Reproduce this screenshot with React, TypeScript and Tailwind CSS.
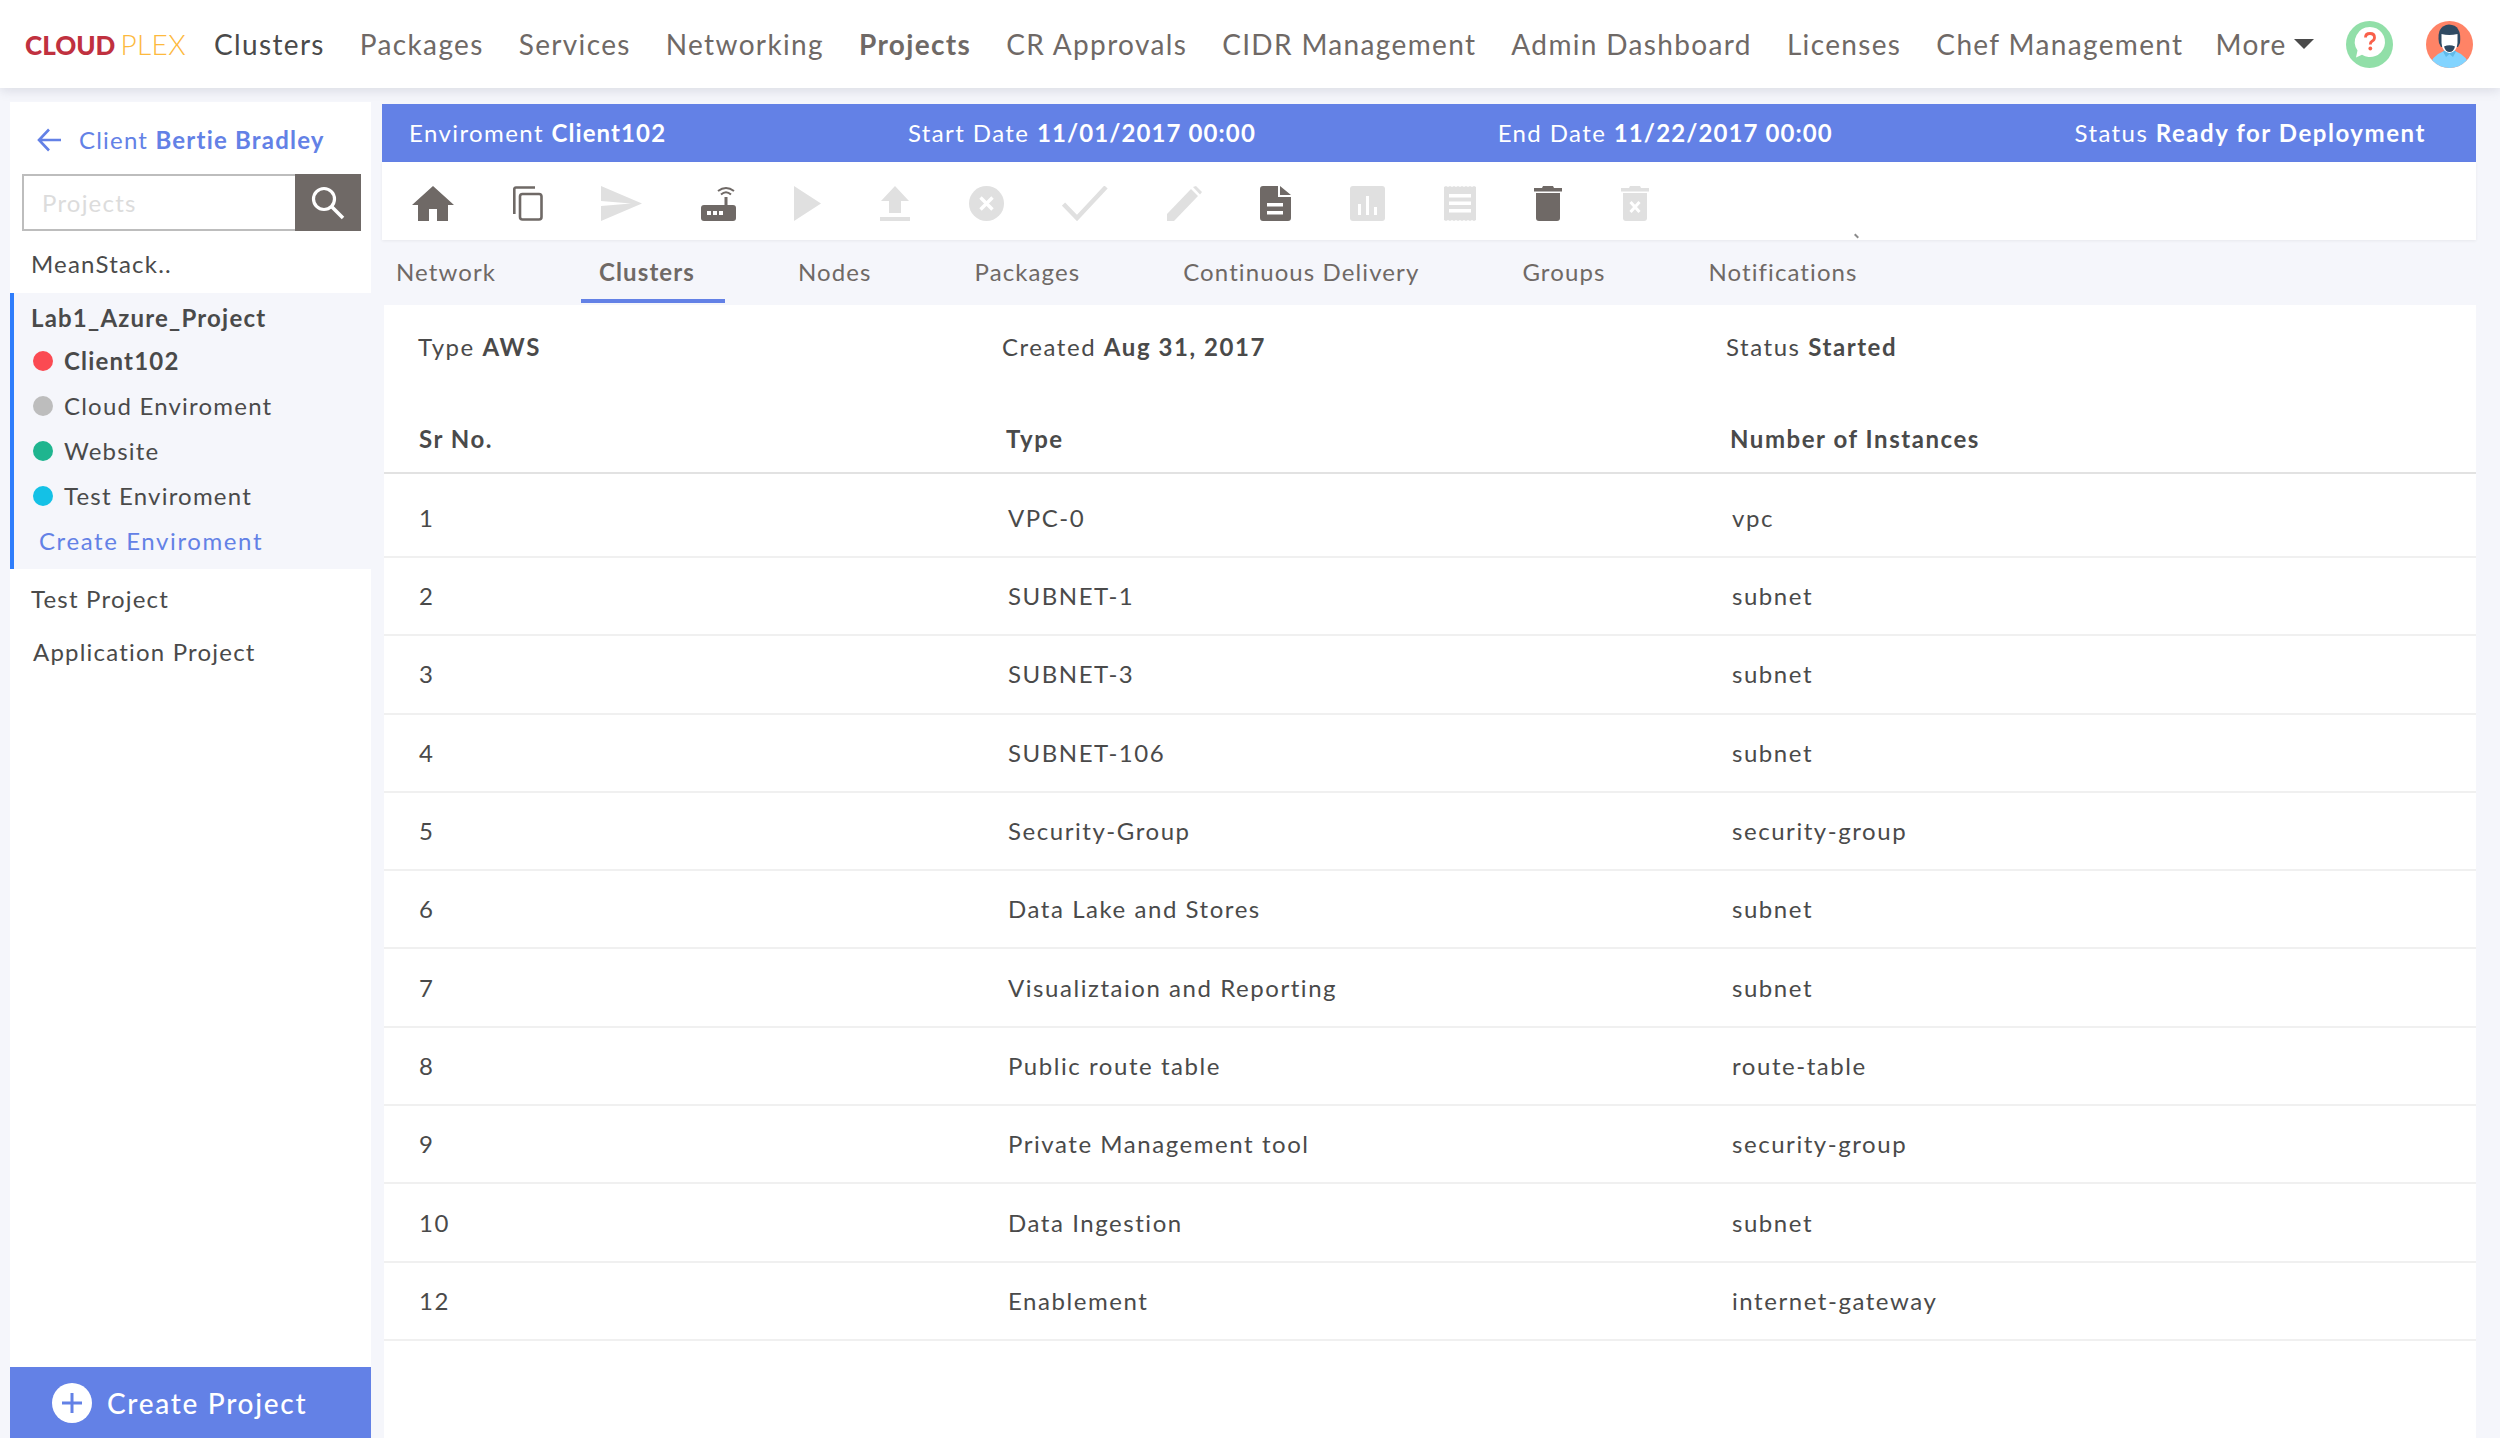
const navItems = [
  { label: "Clusters", cls: "text-[#4a4a4a]" },
  { label: "Packages", cls: "text-[#6f6966]" },
  { label: "Services", cls: "text-[#6f6966]" },
  { label: "Networking", cls: "text-[#6f6966]" },
  { label: "Projects", cls: "text-[#6f6966] font-bold" },
  { label: "CR Approvals", cls: "text-[#6f6966]" },
  { label: "CIDR Management", cls: "text-[#6f6966]" },
  { label: "Admin Dashboard", cls: "text-[#6f6966]" },
  { label: "Licenses", cls: "text-[#6f6966]" },
  { label: "Chef Management", cls: "text-[#6f6966]" },
];

const tabs = ["Network", "Clusters", "Nodes", "Packages", "Continuous Delivery", "Groups", "Notifications"];

const rows = [
  ["1", "VPC-0", "vpc"],
  ["2", "SUBNET-1", "subnet"],
  ["3", "SUBNET-3", "subnet"],
  ["4", "SUBNET-106", "subnet"],
  ["5", "Security-Group", "security-group"],
  ["6", "Data Lake and Stores", "subnet"],
  ["7", "Visualiztaion and Reporting", "subnet"],
  ["8", "Public route table", "route-table"],
  ["9", "Private Management tool", "security-group"],
  ["10", "Data Ingestion", "subnet"],
  ["12", "Enablement", "internet-gateway"],
];

const envs = [
  { name: "Cloud Enviroment", dot: "bg-[#bdbdbd]" },
  { name: "Website", dot: "bg-[#1fb58f]" },
  { name: "Test Enviroment", dot: "bg-[#14c1e6]" },
];

const DARK = "#6f6966";
const OFF = "#e0e0e0";

const Toolbar = () => (
  <div className="relative h-[78px] shrink-0 bg-white flex items-center gap-[58.6px] pl-[30px] pt-[5px] shadow-[0_1px_3px_rgba(0,0,0,0.06)]">
    <svg width="42" height="35" viewBox="0 0 42 35" fill={DARK}>
      <path d="M21 0 L42 19 H36 V35 H25 V23 H17 V35 H6 V19 H0 Z" />
    </svg>
    <svg width="30" height="35" viewBox="0 0 30 35" fill="none" stroke={DARK} strokeWidth="2.6">
      <path d="M22 1.5 H3 Q1.3 1.5 1.3 3 V28" />
      <rect x="7" y="8" width="21.5" height="25.5" rx="2.5" />
    </svg>
    <svg width="41" height="35" viewBox="0 0 41 35" fill={OFF}>
      <path d="M0 0 L41 17.5 L0 35 V20 L30 17.5 L0 15 Z" />
    </svg>
    <svg width="35" height="35" viewBox="0 0 35 35" fill={DARK}>
      <rect x="0" y="19" width="35" height="16" rx="3" />
      <rect x="23.5" y="11" width="3" height="9" />
      <rect x="6" y="25" width="4" height="4" fill="#fff" />
      <rect x="12" y="25" width="4" height="4" fill="#fff" />
      <rect x="18" y="25" width="4" height="4" fill="#fff" />
      <path d="M17 5 Q25 -1 33 5 M20 8.5 Q25 4 30 8.5" fill="none" stroke={DARK} strokeWidth="2" />
    </svg>
    <svg width="27" height="35" viewBox="0 0 27 35" fill={OFF}>
      <path d="M0 0 L27 17.5 L0 35 Z" />
    </svg>
    <svg width="30" height="35" viewBox="0 0 30 35" fill={OFF}>
      <path d="M15 0 L29 15 H21 V27 H9 V15 H1 Z" />
      <rect x="0" y="31" width="30" height="4" />
    </svg>
    <svg width="35" height="35" viewBox="0 0 35 35">
      <circle cx="17.5" cy="17.5" r="17.5" fill={OFF} />
      <path d="M11.5 11.5 L23.5 23.5 M23.5 11.5 L11.5 23.5" stroke="#fff" strokeWidth="3.4" />
    </svg>
    <svg width="46" height="35" viewBox="0 0 46 35" fill="none" stroke={OFF} strokeWidth="4.5">
      <path d="M1.5 18 L15 32 L44 1" />
    </svg>
    <svg width="35" height="35" viewBox="0 0 35 35" fill={OFF}>
      <path d="M0 28 L24 3 L31 10 L7 35 H0 Z M26 1 L29 0 L35 6 L33 8.5 Z" />
    </svg>
    <svg width="31" height="35" viewBox="0 0 31 35" fill={DARK}>
      <path d="M3 0 H18 V11 H31 V32 Q31 35 28 35 H3 Q0 35 0 32 V3 Q0 0 3 0 Z M20 0 L31 9 H20 Z" />
      <rect x="7" y="17" width="16" height="3.5" fill="#fff" />
      <rect x="7" y="25" width="16" height="3.5" fill="#fff" />
    </svg>
    <svg width="35" height="35" viewBox="0 0 35 35">
      <rect width="35" height="35" rx="3" fill={OFF} />
      <rect x="8" y="18" width="3" height="11" fill="#fff" />
      <rect x="16" y="10" width="3" height="19" fill="#fff" />
      <rect x="24" y="21" width="3" height="8" fill="#fff" />
    </svg>
    <svg width="32" height="35" viewBox="0 0 32 35">
      <path d="M0 1 L2 0 L4 1 L6 0 L8 1 L10 0 L12 1 L14 0 L16 1 L18 0 L20 1 L22 0 L24 1 L26 0 L28 1 L30 0 L32 1 V34 L30 35 L28 34 L26 35 L24 34 L22 35 L20 34 L18 35 L16 34 L14 35 L12 34 L10 35 L8 34 L6 35 L4 34 L2 35 L0 34 Z" fill={OFF} />
      <rect x="5" y="8" width="22" height="3.5" fill="#fff" />
      <rect x="5" y="15.5" width="22" height="3.5" fill="#fff" />
      <rect x="5" y="23" width="22" height="3.5" fill="#fff" />
    </svg>
    <svg width="28" height="35" viewBox="0 0 28 35" fill={DARK}>
      <path d="M9 0 H19 L20 2 H28 V5.5 H0 V2 H8 Z" />
      <path d="M2 7 H26 V32 Q26 35 23 35 H5 Q2 35 2 32 Z" />
    </svg>
    <svg width="28" height="35" viewBox="0 0 28 35" fill={OFF}>
      <path d="M9 0 H19 L20 2 H28 V5.5 H0 V2 H8 Z" />
      <path d="M2 7 H26 V32 Q26 35 23 35 H5 Q2 35 2 32 Z" />
      <path d="M9.5 16 L18.5 26 M18.5 16 L9.5 26" stroke="#fff" strokeWidth="3" />
    </svg>
    <span className="absolute left-[1472px] top-[73px] w-[5px] h-[2px] rotate-45 bg-[#8a8a8a]" />
  </div>
);

const App = () => {
  return (
    <div className="h-[1438px] w-[2500px] overflow-hidden flex flex-col bg-[#f5f6fb] font-['Lato',sans-serif] tracking-[1.2px]">
      <header className="h-[88px] shrink-0 bg-white flex items-center pl-[25px] shadow-[0_3px_10px_rgba(90,95,120,0.16)] relative z-10">
        <div className="w-[189px] leading-none tracking-[0px] whitespace-nowrap flex items-baseline">
          <span className="text-[26px] font-black text-[#c0313f]">CLOUD</span>
          <span className="text-[28px] font-light text-[#fdb93d] ml-[5px] tracking-[0.4px]">PLEX</span>
        </div>
        <nav className="flex items-center gap-[35px] text-[28px] tracking-[1.35px] whitespace-nowrap">
          {navItems.map((n) => (
            <span key={n.label} className={n.cls}>
              {n.label}
            </span>
          ))}
          <span className="flex items-center gap-[7px] -ml-[3px] text-[#6f6966]">
            More
            <span className="w-0 h-0 border-x-[10px] border-x-transparent border-t-[10px] border-t-[#4a4a4a]" />
          </span>
        </nav>
        <svg className="ml-[32px]" width="47" height="47" viewBox="0 0 47 47">
          <circle cx="23.5" cy="23.5" r="23.5" fill="#91dfa8" />
          <path d="M24 6 A15 15 0 1 1 16 33.7 L10 36.5 L11.5 29.5 A15 15 0 0 1 24 6 Z" fill="#fff" />
          <path d="M19.5 16.5 Q19.5 12.5 24 12.5 Q28.5 12.5 28.5 16.5 Q28.5 19 26 20.3 Q24.3 21.3 24.3 23.5" fill="none" stroke="#f9604a" strokeWidth="2.8" />
          <circle cx="24.3" cy="27.5" r="1.9" fill="#f9604a" />
        </svg>
        <svg className="ml-[33px]" width="47" height="47" viewBox="0 0 47 47">
          <clipPath id="avatar-clip">
            <circle cx="23.5" cy="23.5" r="23.5" />
          </clipPath>
          <g clipPath="url(#avatar-clip)">
            <rect width="47" height="47" fill="#ff8366" />
            <path d="M3 47 Q5 35 18 30 H29 Q42 35 44 47 Z" fill="#82d4ff" />
            <path d="M17 30.5 L20 36 L23.5 33 L27 36 L30 30.5 L27 28 H20 Z" fill="#5fb9e8" />
            <path d="M13 22 Q10 5 23 3.5 Q36 4 34 22 L32 26 H15 Z" fill="#2f4a62" />
            <path d="M15.5 13 Q23 15 31.5 13 V22 Q31 31 23.5 32 Q16 31 15.5 22 Z" fill="#fff" />
            <path d="M18 25.5 Q23.5 23 29 25.5 Q27.5 31 23.5 31 Q19.5 31 18 25.5 Z" fill="#2f4a62" />
          </g>
        </svg>
      </header>

      <div className="flex-1 min-h-0 flex pl-[10px] pr-[24px] pt-[14px] gap-[11px]">
        <aside className="w-[361px] shrink-0 bg-white flex flex-col">
          <div className="h-[72px] flex items-center pl-[27px] pt-[4px] text-[#6381e6] text-[24px]">
            <svg width="24" height="24" viewBox="0 0 24 24" fill="none" stroke="#6381e6" strokeWidth="2.6">
              <path d="M12 1.5 L2 12 L12 22.5 M2 12 H24" />
            </svg>
            <span className="ml-[18px]">
              Client <span className="font-bold">Bertie Bradley</span>
            </span>
          </div>
          <div className="ml-[12px] mr-[10px] h-[57px] flex">
            <div className="flex-1 border-2 border-r-0 border-[#bdbdbd] flex items-center pl-[18px] text-[24px] text-[#dcdcdc]">
              Projects
            </div>
            <div className="w-[66px] bg-[#6f6966] flex items-center justify-center">
              <svg width="34" height="34" viewBox="0 0 34 34" fill="none" stroke="#fff">
                <circle cx="13" cy="13" r="10.5" strokeWidth="3.2" />
                <path d="M20.5 20.5 L32 32" strokeWidth="3.6" />
              </svg>
            </div>
          </div>
          <div className="h-[62px] flex items-center pl-[21px] pt-[4px] text-[24px] text-[#4a4a4a]">MeanStack..</div>
          <div className="h-[276px] bg-[#f5f6fb] border-l-4 border-[#2f7dfb] pl-[17px] text-[24px] text-[#4a4a4a]">
            <div className="h-[45px] pt-[10px] font-bold leading-[30px]">Lab1_Azure_Project</div>
            <div className="h-[45px] flex items-center gap-[11px] pl-[2px] font-bold">
              <span className="w-[20px] h-[20px] rounded-full bg-[#fb4a52]" />
              Client102
            </div>
            {envs.map((e) => (
              <div key={e.name} className="h-[45px] flex items-center gap-[11px] pl-[2px]">
                <span className={`w-[20px] h-[20px] rounded-full ${e.dot}`} />
                {e.name}
              </div>
            ))}
            <div className="h-[45px] flex items-center pl-[8px] text-[#6381e6] tracking-[1.6px]">Create Enviroment</div>
          </div>
          <div className="h-[60px] flex items-center pl-[21px] text-[24px] text-[#4a4a4a]">Test Project</div>
          <div className="h-[46px] flex items-center pl-[23px] text-[24px] text-[#4a4a4a]">Application Project</div>
          <div className="mt-auto h-[71px] bg-[#6381e6] flex items-center pl-[42px] gap-[15px] text-white text-[28px] font-medium tracking-[1.7px]">
            <span className="w-[40px] h-[40px] rounded-full bg-white flex items-center justify-center">
              <svg width="20" height="20" viewBox="0 0 20 20" fill="#6381e6">
                <path d="M8.5 0 H11.5 V8.5 H20 V11.5 H11.5 V20 H8.5 V11.5 H0 V8.5 H8.5 Z" />
              </svg>
            </span>
            Create Project
          </div>
        </aside>

        <main className="flex-1 min-w-0 flex flex-col pt-[2px]">
          <div className="h-[58px] shrink-0 bg-[#6381e6] text-white text-[24px] tracking-[1.4px] flex items-center justify-between pl-[27px] pr-[50px] whitespace-nowrap">
            <span>
              Enviroment <span className="font-bold tracking-[1.1px]">Client102</span>
            </span>
            <span>
              Start Date <span className="font-bold tracking-[1.1px]">11/01/2017 00:00</span>
            </span>
            <span>
              End Date <span className="font-bold tracking-[1.1px]">11/22/2017 00:00</span>
            </span>
            <span>
              Status <span className="font-bold tracking-[1.55px]">Ready for Deployment</span>
            </span>
          </div>
          <Toolbar />
          <div className="h-[65px] shrink-0 flex items-start pt-[4px] -ml-[4px] gap-[67px] text-[24px] tracking-[1.1px] text-[#6f6966]">
            {tabs.map((t) => (
              <div
                key={t}
                className={
                  t === "Clusters"
                    ? "h-[59px] pl-[18px] pr-[30px] -mr-[12px] flex items-center font-bold border-b-4 border-[#6381e6]"
                    : "h-[59px] px-[18px] flex items-center border-b-4 border-transparent"
                }
              >
                {t}
              </div>
            ))}
          </div>
          <section className="flex-1 min-h-0 ml-[2px] bg-white text-[24px] tracking-[1.55px] text-[#4a4a4a]">
            <div className="h-[84px] grid grid-cols-[584px_724px_1fr] items-center pl-[34px]">
              <span>
                Type <span className="font-bold">AWS</span>
              </span>
              <span>
                Created <span className="font-bold">Aug 31, 2017</span>
              </span>
              <span>
                Status <span className="font-bold">Started</span>
              </span>
            </div>
            <div className="h-[85px] pb-[16px] grid grid-cols-[587px_724px_1fr] items-end pl-[35px] font-bold border-b-2 border-[#e2e2e2]">
              <span className="leading-[34px]">Sr No.</span>
              <span className="leading-[34px]">Type</span>
              <span className="leading-[34px]">Number of Instances</span>
            </div>
            {rows.map((r, i) => (
              <div
                key={r[0]}
                className={
                  i === 0
                    ? "h-[84px] pt-[6px] grid grid-cols-[589px_724px_1fr] items-center pl-[35px] border-b-2 border-[#f0f0f0]"
                    : "h-[78.3px] grid grid-cols-[589px_724px_1fr] items-center pl-[35px] border-b-2 border-[#f0f0f0]"
                }
              >
                <span>{r[0]}</span>
                <span>{r[1]}</span>
                <span>{r[2]}</span>
              </div>
            ))}
          </section>
        </main>
      </div>
    </div>
  );
};

export default App;
